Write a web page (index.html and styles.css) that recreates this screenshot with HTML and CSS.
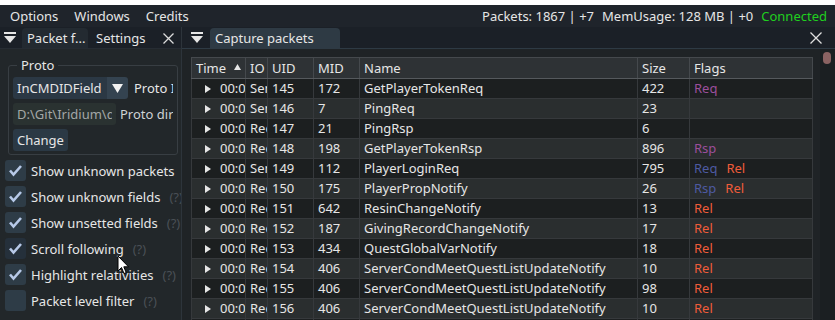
FILE: index.html
```html
<!DOCTYPE html>
<html>
<head>
<meta charset="utf-8">
<link rel="stylesheet" href="styles.css">
</head>
<body>
<div class="top-strip"></div>
<div class="menubar">
  <span class="menu">Options</span><span class="menu">Windows</span><span class="menu">Credits</span>
  <div class="status"><span>Packets: 1867 | +7</span><span>MemUsage: 128 MB | +0</span><span class="ok">Connected</span></div>
</div>
<div class="main">
  <section class="panel left">
    <div class="tabbar">
      <svg class="win-icon" width="12" height="11" viewBox="0 0 12 11"><rect x="0" y="0" width="12" height="2" fill="#e6e6e6"/><polygon points="0,4 12,4 6,11" fill="#e6e6e6"/></svg>
      <div class="tab dim">Packet f...</div>
      <div class="tab plain">Settings<svg class="close" width="11" height="11" viewBox="0 0 11 11"><path d="M0.5 0.5 L10.5 10.5 M10.5 0.5 L0.5 10.5" stroke="#dcdcdc" stroke-width="1.3"/></svg></div>
    </div>
    <div class="content">
      <fieldset class="group">
        <legend>Proto</legend>
        <div class="ctl first">
          <div class="combo"><div class="combo-text">InCMDIDField</div><div class="combo-btn"><svg width="11" height="9" viewBox="0 0 11 9"><polygon points="0,0 11,0 5.5,9" fill="#f2f2f2"/></svg></div></div>
          <span class="ctl-label">Proto ID</span>
        </div>
        <div class="ctl">
          <div class="input"><span class="input-text">D:\Git\Iridium\data\proto</span></div>
          <span class="ctl-label soft">Proto dir</span>
        </div>
        <div class="ctl">
          <div class="button">Change</div>
        </div>
      </fieldset>
      <div class="check"><div class="box"><svg width="21" height="21" viewBox="0 0 21 21"><polyline points="5,10.5 8.5,14.5 16,6" fill="none" stroke="#b7c9e8" stroke-width="2.6"/></svg></div><span class="label">Show unknown packets</span><span class="help">(?)</span></div>
      <div class="check"><div class="box"><svg width="21" height="21" viewBox="0 0 21 21"><polyline points="5,10.5 8.5,14.5 16,6" fill="none" stroke="#b7c9e8" stroke-width="2.6"/></svg></div><span class="label">Show unknown fields</span><span class="help">(?)</span></div>
      <div class="check"><div class="box"><svg width="21" height="21" viewBox="0 0 21 21"><polyline points="5,10.5 8.5,14.5 16,6" fill="none" stroke="#b7c9e8" stroke-width="2.6"/></svg></div><span class="label">Show unsetted fields</span><span class="help">(?)</span></div>
      <div class="check"><div class="box hover"><svg width="21" height="21" viewBox="0 0 21 21"><polyline points="5,10.5 8.5,14.5 16,6" fill="none" stroke="#b7c9e8" stroke-width="2.6"/></svg></div><span class="label">Scroll following</span><span class="help">(?)</span></div>
      <div class="check"><div class="box"><svg width="21" height="21" viewBox="0 0 21 21"><polyline points="5,10.5 8.5,14.5 16,6" fill="none" stroke="#b7c9e8" stroke-width="2.6"/></svg></div><span class="label">Highlight relativities</span><span class="help">(?)</span></div>
      <div class="check"><div class="box"></div><span class="label">Packet level filter</span><span class="help">(?)</span></div>
    </div>
  </section>
  <section class="panel right">
    <div class="tabbar">
      <svg class="win-icon" width="12" height="11" viewBox="0 0 12 11"><rect x="0" y="0" width="12" height="2" fill="#e6e6e6"/><polygon points="0,4 12,4 6,11" fill="#e6e6e6"/></svg>
      <div class="tab active">Capture packets</div>
      <svg class="close right-close" width="12" height="12" viewBox="0 0 12 12"><path d="M0.5 0.5 L11.5 11.5 M11.5 0.5 L0.5 11.5" stroke="#e0e0e0" stroke-width="1.3"/></svg>
    </div>
    <div class="content">
      <div class="table">
        <div class="tr head">
          <div class="td">Time<svg class="sort" width="7" height="6" viewBox="0 0 7 6"><polygon points="3.5,0 7,6 0,6" fill="#e6e6e6"/></svg></div><div class="td">IO</div><div class="td">UID</div><div class="td">MID</div><div class="td">Name</div><div class="td">Size</div><div class="td">Flags</div>
        </div>
        <div class="tr dark"><div class="td"><i class="arrow"></i>00:01:42.613</div><div class="td">Send</div><div class="td">145</div><div class="td">172</div><div class="td">GetPlayerTokenReq</div><div class="td">422</div><div class="td"><span class="f-purple">Req</span></div></div>
        <div class="tr light"><div class="td"><i class="arrow"></i>00:01:42.618</div><div class="td">Send</div><div class="td">146</div><div class="td">7</div><div class="td">PingReq</div><div class="td">23</div><div class="td"></div></div>
        <div class="tr dark"><div class="td"><i class="arrow"></i>00:01:42.702</div><div class="td">Recv</div><div class="td">147</div><div class="td">21</div><div class="td">PingRsp</div><div class="td">6</div><div class="td"></div></div>
        <div class="tr light"><div class="td"><i class="arrow"></i>00:01:42.705</div><div class="td">Recv</div><div class="td">148</div><div class="td">198</div><div class="td">GetPlayerTokenRsp</div><div class="td">896</div><div class="td"><span class="f-purple">Rsp</span></div></div>
        <div class="tr dark"><div class="td"><i class="arrow"></i>00:01:42.811</div><div class="td">Send</div><div class="td">149</div><div class="td">112</div><div class="td">PlayerLoginReq</div><div class="td">795</div><div class="td"><span class="f-blue">Req</span><span class="f-rel">Rel</span></div></div>
        <div class="tr light"><div class="td"><i class="arrow"></i>00:01:42.930</div><div class="td">Recv</div><div class="td">150</div><div class="td">175</div><div class="td">PlayerPropNotify</div><div class="td">26</div><div class="td"><span class="f-blue">Rsp</span><span class="f-rel">Rel</span></div></div>
        <div class="tr dark"><div class="td"><i class="arrow"></i>00:01:42.931</div><div class="td">Recv</div><div class="td">151</div><div class="td">642</div><div class="td">ResinChangeNotify</div><div class="td">13</div><div class="td"><span class="f-rel">Rel</span></div></div>
        <div class="tr light"><div class="td"><i class="arrow"></i>00:01:42.931</div><div class="td">Recv</div><div class="td">152</div><div class="td">187</div><div class="td">GivingRecordChangeNotify</div><div class="td">17</div><div class="td"><span class="f-rel">Rel</span></div></div>
        <div class="tr dark"><div class="td"><i class="arrow"></i>00:01:42.932</div><div class="td">Recv</div><div class="td">153</div><div class="td">434</div><div class="td">QuestGlobalVarNotify</div><div class="td">18</div><div class="td"><span class="f-rel">Rel</span></div></div>
        <div class="tr light"><div class="td"><i class="arrow"></i>00:01:42.932</div><div class="td">Recv</div><div class="td">154</div><div class="td">406</div><div class="td">ServerCondMeetQuestListUpdateNotify</div><div class="td">10</div><div class="td"><span class="f-rel">Rel</span></div></div>
        <div class="tr dark"><div class="td"><i class="arrow"></i>00:01:42.933</div><div class="td">Recv</div><div class="td">155</div><div class="td">406</div><div class="td">ServerCondMeetQuestListUpdateNotify</div><div class="td">98</div><div class="td"><span class="f-rel">Rel</span></div></div>
        <div class="tr light"><div class="td"><i class="arrow"></i>00:01:42.933</div><div class="td">Recv</div><div class="td">156</div><div class="td">406</div><div class="td">ServerCondMeetQuestListUpdateNotify</div><div class="td">10</div><div class="td"><span class="f-rel">Rel</span></div></div>
        <div class="tr dark"><div class="td"><i class="arrow"></i>00:01:42.934</div><div class="td">Recv</div><div class="td">157</div><div class="td">406</div><div class="td">ServerCondMeetQuestListUpdateNotify</div><div class="td">10</div><div class="td"><span class="f-rel">Rel</span></div></div>
      </div>
      <div class="scrollbar"><div class="thumb"></div></div>
    </div>
  </section>
</div>
<svg class="cursor" width="13" height="20" viewBox="0 0 13 20"><path d="M1 1 L1 16 L4.5 12.5 L7 18.5 L9.2 17.6 L6.8 11.8 L11.5 11.8 Z" fill="#ffffff" stroke="#000000" stroke-width="1"/></svg>
</body>
</html>
```
FILE: styles.css
```css
* { box-sizing: border-box; }
html, body { margin: 0; }
body {
  width: 835px;
  height: 320px;
  overflow: hidden;
  background: #ffffff;
  font-family: "Noto Sans", sans-serif;
  font-size: 13px;
  color: #e6e6e6;
  position: relative;
}
.top-strip { height: 5px; background: #ffffff; }
.menubar {
  height: 22px;
  background: #1f242b;
  display: flex;
  align-items: center;
  padding: 0 8px 0 2px;
  white-space: nowrap;
}
.menu { padding: 0 8px; }
.status { margin-left: auto; display: flex; gap: 8px; }
.ok { color: #1fd01f; }

.main { display: flex; height: 293px; }
.panel { display: flex; flex-direction: column; overflow: hidden; }
.panel.left { width: 182px; border-right: 1px solid #2d343b; background: #22272a; }
.panel.right { flex: 1; background: #1f2326; }

.tabbar {
  height: 22px;
  flex: none;
  background: #1b2027;
  display: flex;
  align-items: flex-end;
  border-bottom: 1px solid #262c33;
  white-space: nowrap;
}
.right .tabbar { border-bottom-color: #2e3a44; padding-left: 9px; }
.left .tabbar { padding-left: 4px; }
.win-icon { flex: none; margin-bottom: 5px; }
.tab {
  height: 20px;
  line-height: 19px;
  border-radius: 4px 4px 0 0;
  display: flex;
  align-items: center;
}
.tab.dim { background: #232a31; margin-left: 6px; padding: 0 5px; width: 66px; }
.tab.plain { padding: 0 0 0 8px; }
.tab.plain .close { margin-left: 18px; }
.tab.active { background: #2e3a44; margin-left: 7px; width: 130px; padding-left: 5px; }
.right-close { margin-left: auto; margin-right: 13px; margin-bottom: 4px; }

.left .content { padding: 7px 0 0 5px; }
.group {
  margin: 0 0 0 3px;
  width: 170px;
  min-width: 0;
  border: 1px solid #383e43;
  border-radius: 3px;
  padding: 0 4px 3px 4px;
}
.group legend {
  margin-left: 4px;
  padding: 0 4px;
  line-height: 18px;
  height: 18px;
}
.ctl {
  display: flex;
  align-items: center;
  height: 22px;
  margin-top: 4px;
  white-space: nowrap;
  overflow: hidden;
}
.ctl.first { margin-top: 3px; }
.combo { display: flex; height: 22px; flex: none; }
.combo-text {
  width: 94px;
  background: #2b3844;
  padding-left: 4px;
  line-height: 22px;
  border-radius: 3px 0 0 3px;
}
.combo-btn {
  width: 21px;
  background: #344350;
  display: flex;
  align-items: center;
  justify-content: center;
  border-radius: 0 3px 3px 0;
}
.ctl-label { margin-left: 6px; }
.ctl-label.soft { margin-left: 4px; color: #cfd3d6; }
.input {
  width: 103px;
  flex: none;
  height: 22px;
  line-height: 22px;
  background: #2a3231;
  color: #a3a7a7;
  padding-left: 4px;
  border-radius: 3px;
  display: flex;
}
.input-text { display: block; width: 95px; overflow: hidden; }
.button {
  width: 55px;
  height: 22px;
  line-height: 22px;
  background: #2b3945;
  padding-left: 4px;
  border-radius: 3px;
}

.check {
  display: flex;
  align-items: center;
  height: 21px;
  margin-top: 5px;
  white-space: nowrap;
}
.box {
  width: 21px;
  height: 21px;
  flex: none;
  background: #2e3c47;
  border-radius: 3px;
}
.box svg { display: block; }
.box.hover { background: #25303b; }
.label { margin-left: 5px; }
.help { margin-left: 9px; color: #4a5056; }

.right .content { display: flex; flex: 1; overflow: hidden; }
.table { margin: 8px 0 0 9px; width: 622px; flex: none; border-top: 1px solid #45494d; }
.tr {
  display: grid;
  grid-template-columns: 54px 22px 46px 46px 278px 52px 124px;
  height: 20px;
  border-bottom: 1px solid #36393c;
  white-space: nowrap;
}
.tr.head { height: 21px; background: #2e3235; border-bottom: 1px solid #55595d; }
.tr.dark { background: #1c1f20; }
.tr.light { background: #2a2e2f; }
.td {
  border-left: 1px solid #36393c;
  padding-left: 4px;
  line-height: 19px;
  overflow: hidden;
  display: flex;
  align-items: center;
}
.td:last-child { border-right: 1px solid #36393c; }
.head .td { border-left-color: #45494d; }
.head .td:last-child { border-right-color: #45494d; }
.sort { margin-left: 8px; margin-bottom: 3px; flex: none; }
.arrow {
  flex: none;
  width: 0;
  height: 0;
  border-top: 4px solid transparent;
  border-bottom: 4px solid transparent;
  border-left: 6px solid #e6e6e6;
  margin: 0 9px 0 9px;
}
.f-purple { color: #9c4f9c; }
.f-blue { color: #4e5aa2; margin-right: 9px; }
.f-rel { color: #f05c3a; }

.scrollbar {
  margin-left: auto;
  width: 15px;
  background: #1b1f22;
  padding: 3px 0 0 3px;
}
.thumb {
  width: 8px;
  height: 12px;
  border-radius: 4px;
  background: #8a6262;
}

.cursor { position: absolute; left: 117px; top: 255px; }
```
